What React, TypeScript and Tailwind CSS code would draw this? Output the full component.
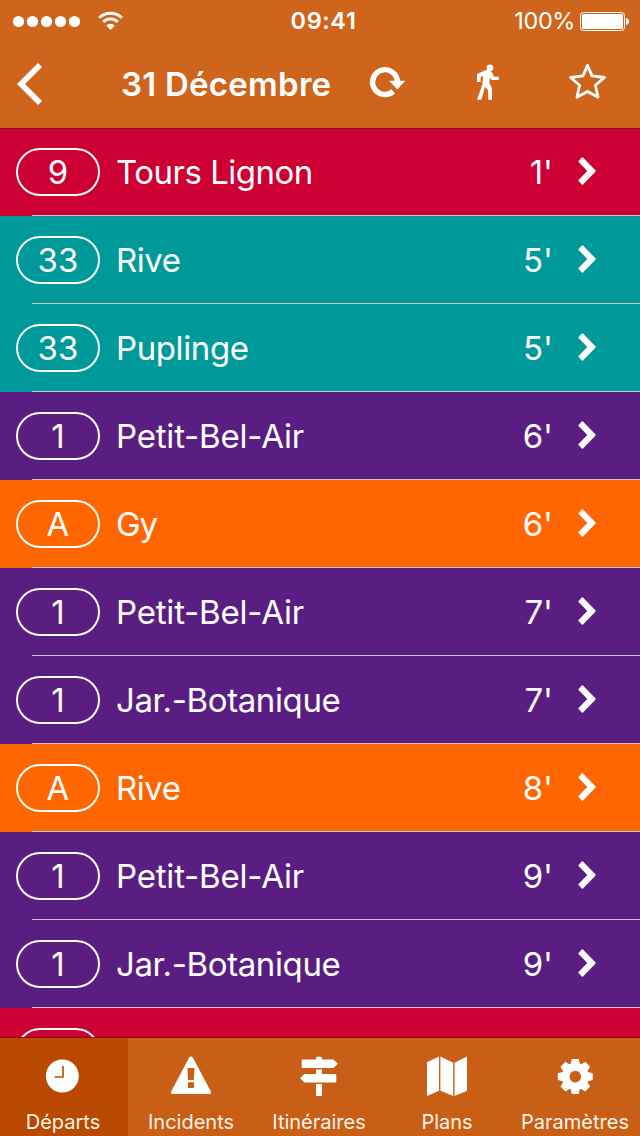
import type { ReactNode } from 'react';

type Line = { code: string; name: string; wait: string; bg: string; nameSpacing: string };

const RED = 'bg-[#cc0033]';
const TEAL = 'bg-[#009999]';
const PURPLE = 'bg-[#5a1e82]';
const ORANGE = 'bg-[#ff6600]';

const departures: Line[] = [
  { code: '9', name: 'Tours Lignon', wait: "1'", bg: RED, nameSpacing: 'tracking-[-0.5px]' },
  { code: '33', name: 'Rive', wait: "5'", bg: TEAL, nameSpacing: 'tracking-[-0.5px]' },
  { code: '33', name: 'Puplinge', wait: "5'", bg: TEAL, nameSpacing: 'tracking-[-0.4px]' },
  { code: '1', name: 'Petit-Bel-Air', wait: "6'", bg: PURPLE, nameSpacing: 'tracking-[-0.2px]' },
  { code: 'A', name: 'Gy', wait: "6'", bg: ORANGE, nameSpacing: 'tracking-[-1px]' },
  { code: '1', name: 'Petit-Bel-Air', wait: "7'", bg: PURPLE, nameSpacing: 'tracking-[-0.2px]' },
  { code: '1', name: 'Jar.-Botanique', wait: "7'", bg: PURPLE, nameSpacing: 'tracking-[-0.38px]' },
  { code: 'A', name: 'Rive', wait: "8'", bg: ORANGE, nameSpacing: 'tracking-[-0.5px]' },
  { code: '1', name: 'Petit-Bel-Air', wait: "9'", bg: PURPLE, nameSpacing: 'tracking-[-0.2px]' },
  { code: '1', name: 'Jar.-Botanique', wait: "9'", bg: PURPLE, nameSpacing: 'tracking-[-0.38px]' },
  { code: '', name: '', wait: '', bg: RED, nameSpacing: '' },
];

function StatusBar() {
  return (
    <div className="grid h-10 grid-cols-3 items-center">
      <svg className="h-10 w-32" viewBox="0 0 128 40" fill="#fff">
        {[18.5, 32.5, 46.5, 60.5, 74.5].map((x) => (
          <circle key={x} cx={x} cy="20.5" r="5.6" />
        ))}
        <g fill="none" stroke="#fff" strokeWidth="2.9">
          <path d="M99.2 16.8a16.2 16.2 0 0 1 22.6 0" />
          <path d="M103.2 20.9a10.4 10.4 0 0 1 14.6 0" />
        </g>
        <path d="M106.2 24.4a6.2 6.2 0 0 1 8.6 0L110.5 28.9z" />
      </svg>
      <div className="pl-[7px] pt-px text-center text-[23.5px] font-semibold leading-10 tracking-[0.6px]">09:41</div>
      <div className="flex items-center justify-end pr-[10px]">
        <span className="mr-[5px] pt-px text-[23.5px] leading-10 tracking-[-0.4px]">100%</span>
        <svg className="h-10 w-[50px]" viewBox="580 0 50 40" fill="#fff">
          <rect x="580.5" y="11.5" width="44" height="18" rx="3" fill="none" stroke="#fff" />
          <rect x="582" y="13" width="41" height="15" rx="1.5" />
          <path d="M626 17q3 .6 3 3.5t-3 3.5z" />
        </svg>
      </div>
    </div>
  );
}

function NavBar() {
  return (
    <div className="flex h-[88px] items-center">
      <svg className="h-[88px] w-[121px]" viewBox="0 40 121 88" fill="#fff">
        <path d="M17 84 38 63l4 4-17 17 17 17-4 4z" />
      </svg>
      <h1 className="w-[241px] whitespace-nowrap text-[33px] font-semibold leading-[88px] tracking-[0.25px]">31 Décembre</h1>
      <svg className="h-[88px] w-[60px]" viewBox="362 40 60 88" fill="#fff">
        <path d="M397.4 82A12.4 12.4 0 1 0 393.2 91.4" fill="none" stroke="#fff" strokeWidth="5.4" />
        <path d="M389 80.8H405.2l-7.8 8.8z" />
      </svg>
      <svg className="h-[88px] w-[130px]" viewBox="422 40 130 88" fill="#fff">
        <circle cx="490" cy="67.8" r="3.3" />
        <path d="M477 74 486 70h3l2.7 2 2.5 4.7h4.6v3.3H491.6l-1.6-2.5-.7 5.5 2.7 5.3v11.4h-3.8V90.5l-3.2-3.7-3.7 12.9H477l5.3-15 .8-8.6-2.5 1V82H477z" />
      </svg>
      <svg className="h-[88px] w-[88px]" viewBox="552 40 88 88" fill="none">
        <path
          d="M587.5 65.4 592 75.9 604.4 77.5 595.4 85.2 598 97.2 587.5 91.5 577 97.2 579.6 85.2 570.6 77.5 583 75.9z"
          stroke="#fff"
          strokeWidth="2.8"
          strokeLinejoin="round"
        />
      </svg>
    </div>
  );
}

function DepartureRow({ line }: { line: Line }) {
  return (
    <li className={`flex h-[88px] shrink-0 flex-col ${line.bg}`}>
      <div className="flex h-[87px] items-center pt-px text-[33px] leading-[34px]">
        <div className="ml-4 flex h-12 w-[84px] items-center justify-center rounded-full border-2 border-white">
          {line.code}
        </div>
        <div className={`ml-[16px] flex-1 whitespace-nowrap ${line.nameSpacing}`}>{line.name}</div>
        <div className="mr-[25px]">{line.wait}</div>
        <svg className="mr-[42px] h-[30px] w-[20px] -translate-y-px" viewBox="578 156 20 30" fill="#fff">
          <path d="m583 157.6 12.6 12.8q.6.6 0 1.2L583 184.4q-.6.5-1.2 0l-3.2-3.3q-.5-.6 0-1.2l8.7-8.9-8.7-8.9q-.5-.6 0-1.2l3.2-3.3q.6-.5 1.2 0z" />
        </svg>
      </div>
      <div className="ml-8 h-px bg-[#c8c7cc]" />
    </li>
  );
}

function Tab({ x, label, active, children }: { x: number; label: string; active?: boolean; children: ReactNode }) {
  return (
    <div className={`flex w-32 flex-col items-center ${active ? 'bg-[#b94800]' : ''}`}>
      <svg className="h-[68px] w-32 shrink-0" viewBox={`${x} 1038 128 68`} fill="#fff">
        {children}
      </svg>
      <span className="mr-[2px] whitespace-nowrap pt-px text-[20px] leading-[30px] text-[#fff4ea]">{label}</span>
    </div>
  );
}

function TabBar() {
  return (
    <nav className="flex h-[99px] shrink-0 border-t border-[#990a16] bg-[#c95f16]">
      <Tab x={0} label="Départs" active>
        <circle cx="62.3" cy="1076" r="16.5" />
        <path d="M63 1066v11h-8.3" fill="none" stroke="#b94800" strokeWidth="1.6" />
      </Tab>
      <Tab x={128} label="Incidents">
        <path d="M189.2 1057.5q1.8-2 3.6 0l18 34q.8 2.5-1.8 2.5h-36q-2.6 0-1.8-2.5z" />
        <path d="M187.4 1068h7l-.6 12h-5.8zM188 1082.2h6v5.8h-6z" fill="#c95f16" />
      </Tab>
      <Tab x={256} label="Itinéraires">
        <path d="M316 1059.4v-2q3-2 6 0v2h11.5l4.5 4.3-4.5 4.3H303q-1.3 0-1.3-1.3v-6q0-1.3 1.3-1.3zM316 1069.4h6v4.6h13q1.3 0 1.3 1.3v6q0 1.3-1.3 1.3h-30.5L300 1078.3l4.5-4.3H316zM316 1084h6v12h-6z" />
      </Tab>
      <Tab x={384} label="Plans">
        <path d="m427 1062.3 12-5.8v34.2l-12 5.3zM440.4 1056.6l12.8 6.2v33.2l-12.8-5.3zM454.6 1062.8l12.4-6.3v34.2l-12.4 5.3z" />
      </Tab>
      <Tab x={512} label="Paramètres">
        <g transform="translate(575.3 1076.6)">
          <circle r="9.6" fill="none" stroke="#fff" strokeWidth="7.6" />
          {[0, 45, 90, 135, 180, 225, 270, 315].map((a) => (
            <path key={a} d="M-4.9-11.5-3.4-17.5H3.4L4.9-11.5z" transform={`rotate(${a})`} />
          ))}
        </g>
      </Tab>
    </nav>
  );
}

export default function App() {
  return (
    <div className="flex h-[1136px] w-[640px] flex-col overflow-hidden font-['Inter',sans-serif] text-white">
      <header className="relative z-10 h-[129px] shrink-0 border-b border-[#82102a] bg-[#cf651d]">
        <StatusBar />
        <NavBar />
      </header>
      <ul className="-mt-px flex h-[909px] shrink-0 flex-col overflow-hidden">
        {departures.map((line, i) => (
          <DepartureRow key={i} line={line} />
        ))}
      </ul>
      <TabBar />
    </div>
  );
}
